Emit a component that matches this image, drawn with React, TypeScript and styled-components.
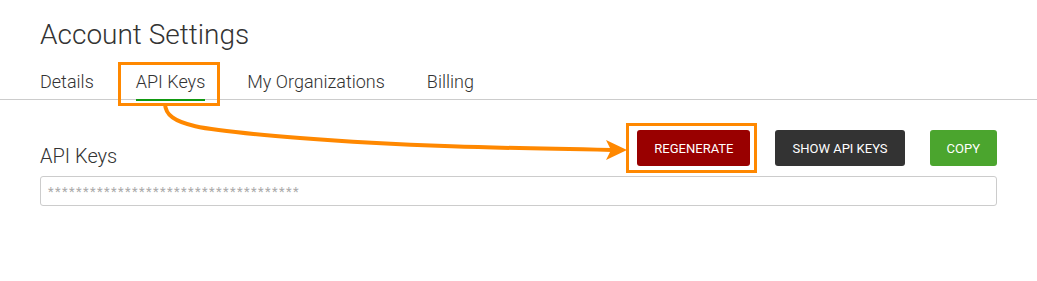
import React from "react";
import styled, { createGlobalStyle } from "styled-components";

const GlobalStyle = createGlobalStyle`
  html, body {
    margin: 0;
    padding: 0;
    background: #ffffff;
  }
  body {
    font-family: Roboto, "Noto Sans", Arial, sans-serif;
    color: #333333;
  }
  * { box-sizing: border-box; }
`;

const Page = styled.div`
  position: relative;
  width: 1037px;
  height: 281px;
  overflow: hidden;
  background: #fff;
`;

const Title = styled.h1`
  margin: 0;
  padding: 18px 40px 0;
  font-size: 28px;
  line-height: 34px;
  font-weight: 300;
  color: #333;
`;

const TabList = styled.nav`
  display: flex;
  gap: 42px;
  margin-top: 19px;
  padding: 0 40px;
  border-bottom: 1px solid #cccccc;
`;

const Tab = styled.a<{ $active?: boolean }>`
  position: relative;
  display: block;
  font-size: 18px;
  line-height: 22px;
  font-weight: 300;
  padding-bottom: 6px;
  margin-bottom: -2px;
  color: #333;
  text-decoration: none;
  border-bottom: 2px solid ${(p) => (p.$active ? "#119911" : "transparent")};
`;

const Highlight = styled.span<{ $l: number; $r: number; $t: number; $b: number }>`
  position: absolute;
  left: ${(p) => p.$l}px;
  right: ${(p) => p.$r}px;
  top: ${(p) => p.$t}px;
  bottom: ${(p) => p.$b}px;
  border: 3px solid #ff8800;
  pointer-events: none;
`;

const Section = styled.section`
  padding: 30px 40px 0;
`;

const HeaderRow = styled.div`
  display: flex;
  align-items: flex-end;
  justify-content: space-between;
`;

const Label = styled.h2`
  margin: 0 0 -2px;
  font-size: 20px;
  line-height: 24px;
  font-weight: 300;
  color: #333;
`;

const Actions = styled.div`
  display: flex;
  gap: 25px;
`;

const ButtonWrap = styled.div`
  position: relative;
  display: flex;
`;

const Button = styled.button<{ $bg: string }>`
  height: 36px;
  padding: 0 17px;
  border: none;
  border-radius: 3px;
  background: ${(p) => p.$bg};
  color: #ffffff;
  font-family: Roboto, Arial, sans-serif;
  font-size: 13px;
  font-weight: 400;
  text-transform: uppercase;
  cursor: pointer;
`;

const KeyField = styled.div`
  margin-top: 10px;
  height: 30px;
  border: 1px solid #cccccc;
  border-radius: 3px;
  padding: 0 7px;
  display: flex;
  align-items: center;
  font-size: 13px;
  letter-spacing: 1.4px;
  color: #aaaaaa;
`;

const ArrowLayer = styled.svg`
  position: absolute;
  left: 0;
  top: 0;
  pointer-events: none;
`;

export default function App() {
  return (
    <>
      <GlobalStyle />
      <Page>
        <Title>Account Settings</Title>
        <TabList>
          <Tab>Details</Tab>
          <Tab $active>
            API Keys
            <Highlight $l={-18} $r={-15} $t={-9} $b={-7} />
          </Tab>
          <Tab>My Organizations</Tab>
          <Tab>Billing</Tab>
        </TabList>
        <Section>
          <HeaderRow>
            <Label>API Keys</Label>
            <Actions>
              <ButtonWrap>
                <Button $bg="#990000">Regenerate</Button>
                <Highlight $l={-11} $r={-7} $t={-7} $b={-7} />
              </ButtonWrap>
              <Button $bg="#333333">Show API Keys</Button>
              <Button $bg="#4ba52e">Copy</Button>
            </Actions>
          </HeaderRow>
          <KeyField>{"*".repeat(36)}</KeyField>
        </Section>
        <ArrowLayer width="1037" height="281" viewBox="0 0 1037 281">
          <path
            d="M165 104 C 166 126 200 130 300 138 C 400 146 500 148 612 150"
            fill="none"
            stroke="#ff8800"
            strokeWidth="4"
          />
          <path d="M606 140 L627 150 L606 160 L611 150 Z" fill="#ff8800" />
        </ArrowLayer>
      </Page>
    </>
  );
}
